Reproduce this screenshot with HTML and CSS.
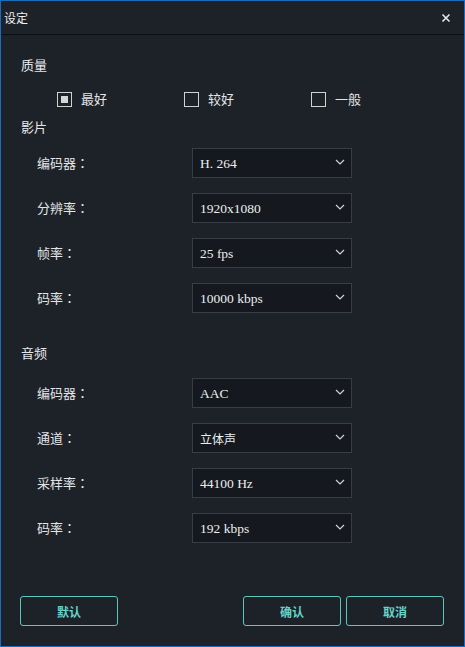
FILE: index.html
```html
<!DOCTYPE html>
<html lang="zh">
<head>
<meta charset="utf-8">
<title>设定</title>
<link rel="stylesheet" href="styles.css">
</head>
<body>
<div class="window">
  <div class="titlebar">
    <span class="title">设定</span>
    <svg class="close" width="10" height="10" viewBox="0 0 10 10"><path d="M1.5 1.5 L8.5 8.5 M8.5 1.5 L1.5 8.5" stroke="#e8e8e8" stroke-width="1.6" fill="none"/></svg>
  </div>
  <div class="content">
    <div class="heading h-quality">质量</div>
    <div class="checks">
      <div class="check"><span class="box checked"><span class="dot"></span></span><span>最好</span></div>
      <div class="check"><span class="box"></span><span>较好</span></div>
      <div class="check"><span class="box"></span><span>一般</span></div>
    </div>
    <div class="heading h-video">影片</div>
    <div class="rows">
      <div class="row"><span class="label">编码器<span class="colon" lang="ja">：</span></span><div class="select"><span>H. 264</span><svg class="chev" width="10" height="6" viewBox="0 0 10 6"><path d="M1 1 L5 5 L9 1" stroke="#d0d2d4" stroke-width="1.2" fill="none"/></svg></div></div>
      <div class="row"><span class="label">分辨率<span class="colon" lang="ja">：</span></span><div class="select"><span>1920x1080</span><svg class="chev" width="10" height="6" viewBox="0 0 10 6"><path d="M1 1 L5 5 L9 1" stroke="#d0d2d4" stroke-width="1.2" fill="none"/></svg></div></div>
      <div class="row"><span class="label">帧率<span class="colon" lang="ja">：</span></span><div class="select"><span>25 fps</span><svg class="chev" width="10" height="6" viewBox="0 0 10 6"><path d="M1 1 L5 5 L9 1" stroke="#d0d2d4" stroke-width="1.2" fill="none"/></svg></div></div>
      <div class="row"><span class="label">码率<span class="colon" lang="ja">：</span></span><div class="select"><span>10000 kbps</span><svg class="chev" width="10" height="6" viewBox="0 0 10 6"><path d="M1 1 L5 5 L9 1" stroke="#d0d2d4" stroke-width="1.2" fill="none"/></svg></div></div>
    </div>
    <div class="heading h-audio">音频</div>
    <div class="rows audio">
      <div class="row"><span class="label">编码器<span class="colon" lang="ja">：</span></span><div class="select"><span>AAC</span><svg class="chev" width="10" height="6" viewBox="0 0 10 6"><path d="M1 1 L5 5 L9 1" stroke="#d0d2d4" stroke-width="1.2" fill="none"/></svg></div></div>
      <div class="row"><span class="label">通道<span class="colon" lang="ja">：</span></span><div class="select"><span class="cjk">立体声</span><svg class="chev" width="10" height="6" viewBox="0 0 10 6"><path d="M1 1 L5 5 L9 1" stroke="#d0d2d4" stroke-width="1.2" fill="none"/></svg></div></div>
      <div class="row"><span class="label">采样率<span class="colon" lang="ja">：</span></span><div class="select"><span>44100 Hz</span><svg class="chev" width="10" height="6" viewBox="0 0 10 6"><path d="M1 1 L5 5 L9 1" stroke="#d0d2d4" stroke-width="1.2" fill="none"/></svg></div></div>
      <div class="row"><span class="label">码率<span class="colon" lang="ja">：</span></span><div class="select"><span>192 kbps</span><svg class="chev" width="10" height="6" viewBox="0 0 10 6"><path d="M1 1 L5 5 L9 1" stroke="#d0d2d4" stroke-width="1.2" fill="none"/></svg></div></div>
    </div>
  </div>
  <div class="footer">
    <button class="btn">默认</button>
    <div class="right">
      <button class="btn">确认</button>
      <button class="btn">取消</button>
    </div>
  </div>
</div>
</body>
</html>
```
FILE: styles.css
```css
* { box-sizing: border-box; }
html, body { margin: 0; padding: 0; background: #1d2229; }
body {
  font-family: "Noto Sans CJK SC", "Noto Sans", sans-serif;
  color: #e2e4e6;
}
.window {
  width: 465px;
  height: 647px;
  border: 1px solid #1a6cc0;
  background: #1d2229;
  display: flex;
  flex-direction: column;
}
.titlebar {
  height: 34px;
  border-bottom: 1px solid #0c0e11;
  display: flex;
  align-items: center;
  justify-content: space-between;
  padding: 1px 13px 0 3px;
  flex-shrink: 0;
}
.title { font-size: 12px; line-height: 16px; color: #f0f0f0; }
.close { display: block; }
.content { padding: 0 0 0 20px; }
.heading { font-size: 13px; line-height: 18px; color: #e6e8ea; }
.h-quality { margin-top: 21px; }
.checks {
  margin-top: 16px;
  padding-left: 36px;
  display: flex;
  height: 18px;
}
.check {
  width: 127px;
  display: flex;
  align-items: center;
  gap: 9px;
  font-size: 13px;
  line-height: 18px;
}
.box {
  width: 15px;
  height: 15px;
  border: 1px solid #cfd1d3;
  display: flex;
  align-items: center;
  justify-content: center;
}
.dot { width: 7px; height: 7px; background: #d4d6d8; }
.h-video { margin-top: 10px; }
.rows {
  margin-top: 12px;
  display: flex;
  flex-direction: column;
  gap: 15px;
}
.rows.audio { margin-top: 16px; }
.h-audio { margin-top: 31px; }
.row {
  display: grid;
  grid-template-columns: 155px 160px;
  padding-left: 16px;
  align-items: center;
  height: 30px;
}
.label { font-size: 13px; line-height: 18px; color: #e2e4e6; }
.colon { font-family: "Noto Sans CJK JP", "Noto Sans CJK TC", sans-serif; }
.select {
  height: 30px;
  border: 1px solid #373c45;
  background: #15191f;
  display: flex;
  align-items: center;
  justify-content: space-between;
  padding: 1px 6px 0 7px;
  font-family: "Liberation Serif", "DejaVu Serif", serif;
  font-size: 13.5px;
  color: #eceeef;
}
.select .cjk { font-family: "Noto Sans CJK SC", sans-serif; font-size: 12px; }
.chev { display: block; margin-bottom: 3px; }
.footer {
  margin-top: 53px;
  display: flex;
  justify-content: space-between;
  padding: 0 20px 0 19px;
}
.right { display: flex; gap: 5px; }
.btn {
  width: 98px;
  height: 30px;
  border: 1px solid #5ec7bd;
  border-radius: 3px;
  background: transparent;
  color: #66d3c9;
  font-family: "Noto Sans CJK SC", sans-serif;
  font-weight: bold;
  font-size: 12px;
  padding: 0;
}
```
